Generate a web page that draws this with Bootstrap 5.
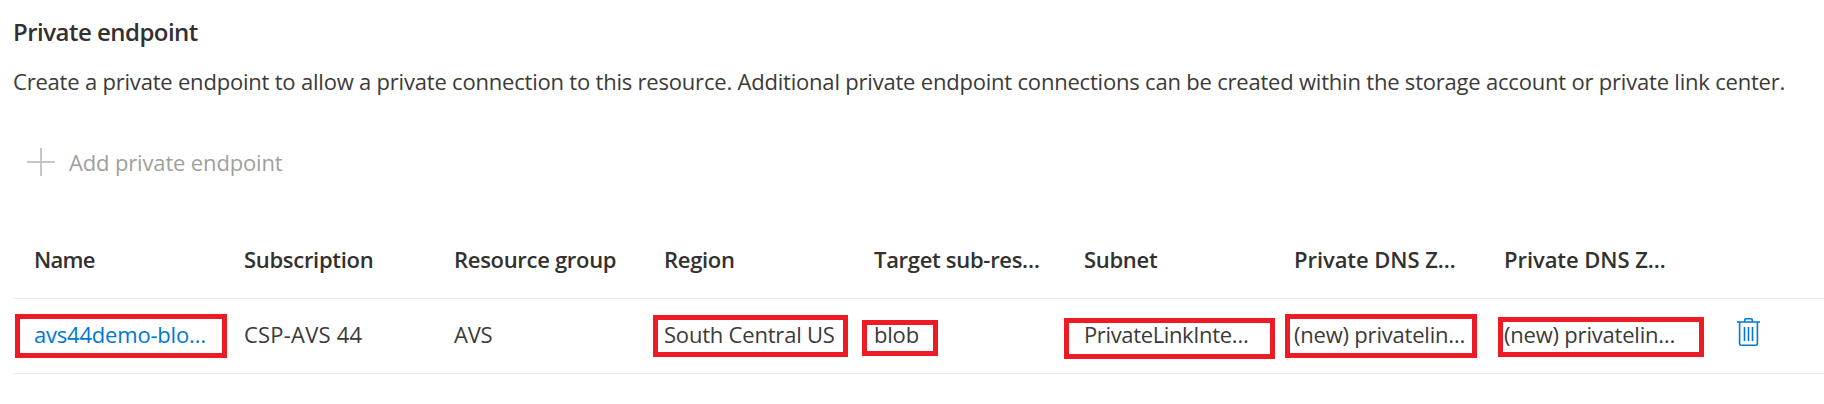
<!DOCTYPE html>
<html lang="en">
<head>
<meta charset="utf-8">
<meta name="viewport" content="width=device-width, initial-scale=1">
<title>Private endpoint</title>
<link href="https://cdn.jsdelivr.net/npm/bootstrap@5.3.0/dist/css/bootstrap.min.css" rel="stylesheet">
<style>
  body { font-family: "Open Sans", "Noto Sans", sans-serif; font-size: 22px; line-height: 30px; letter-spacing: -.203px; color: #3b3a39; background: #fff; overflow: hidden; white-space: nowrap; }
  .pe-page { padding: 16px 0 0 13px; }
  .pe-title { font-size: 24px; line-height: 32px; font-weight: 550; letter-spacing: -.52px; color: #323130; margin-bottom: 18px; }
  .pe-intro { margin-bottom: 51px; }
  .pe-add { color: #a19f9d; padding: 0 0 0 14px; font-size: 22px; line-height: 30px; gap: 14px; letter-spacing: -.15px; }
  .pe-grid { margin-top: 46px; }
  .pe-line { display: grid; grid-template-columns: repeat(8, 210px) 1fr; padding: 0 0 4px 21px; border-bottom: 1px solid #edebe9; height: 75px; align-items: center; }
  .pe-head { font-weight: 550; color: #323130; letter-spacing: -.3px; height: 76px; }
  .pe-link { color: #0078d4; text-decoration: none; }
  .pe-line > div { position: relative; }
  .pe-mark { position: absolute; border: 5px solid #ed1c24; pointer-events: none; }
  .mark-name { left: -19px; top: -5px; width: 212px; height: 44px; }
  .mark-region { left: -11px; top: -4px; width: 195px; height: 42px; }
  .mark-target { left: -12px; top: 1px; width: 76px; height: 36px; }
  .mark-subnet { left: -20px; top: -1px; width: 211px; height: 41px; }
  .mark-zone { left: -9px; top: -5px; width: 192px; height: 44px; }
  .mark-zone-id { left: -6px; top: -2px; width: 206px; height: 40px; }
  .pe-trash { margin: 0 0 4px 23px; }
  .ls-a { letter-spacing: -.75px; }
  .ls-b { letter-spacing: -.06px; }
  .ls-c { letter-spacing: .2px; }
  .ls-d { letter-spacing: -.36px; }
</style>
</head>
<body>
<main class="pe-page">
  <h1 class="pe-title">Private endpoint</h1>
  <p class="pe-intro">Create a private endpoint to allow a private connection to this resource. Additional private endpoint connections can be created within the storage account or private link center.</p>
  <button type="button" class="pe-add btn border-0 rounded-0 d-flex align-items-center">
    <svg width="28" height="28" viewBox="0 0 28 28" fill="none" stroke="#c8c6c4" stroke-width="2"><path d="M14 0v28M0 14h28"/></svg>
    <span>Add private endpoint</span>
  </button>
  <section class="pe-grid">
    <div class="pe-line pe-head">
      <div class="ls-a">Name</div>
      <div>Subscription</div>
      <div>Resource group</div>
      <div>Region</div>
      <div>Target sub-res…</div>
      <div>Subnet</div>
      <div class="ls-b">Private DNS Z…</div>
      <div class="ls-b">Private DNS Z…</div>
      <div></div>
    </div>
    <div class="pe-line">
      <div><a class="pe-link" href="#">avs44demo-blo…</a><span class="pe-mark mark-name"></span></div>
      <div class="ls-c">CSP-AVS 44</div>
      <div>AVS</div>
      <div>South Central US<span class="pe-mark mark-region"></span></div>
      <div>blob<span class="pe-mark mark-target"></span></div>
      <div class="ls-d">PrivateLinkInte…<span class="pe-mark mark-subnet"></span></div>
      <div>(new) privatelin…<span class="pe-mark mark-zone"></span></div>
      <div>(new) privatelin…<span class="pe-mark mark-zone-id"></span></div>
      <div class="d-flex">
        <svg class="pe-trash" width="24" height="30" viewBox="0 0 24 30" fill="none" stroke="#0078d4" stroke-width="1.6"><path d="M0 5h23M7.700 5V3q0-1.200 1.200-1.200h5.200q1.200 0 1.200 1.200v2M2.600 5v21.700q0 1.500 1.500 1.500h14.800q1.500 0 1.500-1.500V5M7.500 10v14M11.500 10v14M15.500 10v14"/></svg>
      </div>
    </div>
  </section>
</main>
<script src="https://cdn.jsdelivr.net/npm/bootstrap@5.3.0/dist/js/bootstrap.bundle.min.js"></script>
</body>
</html>
